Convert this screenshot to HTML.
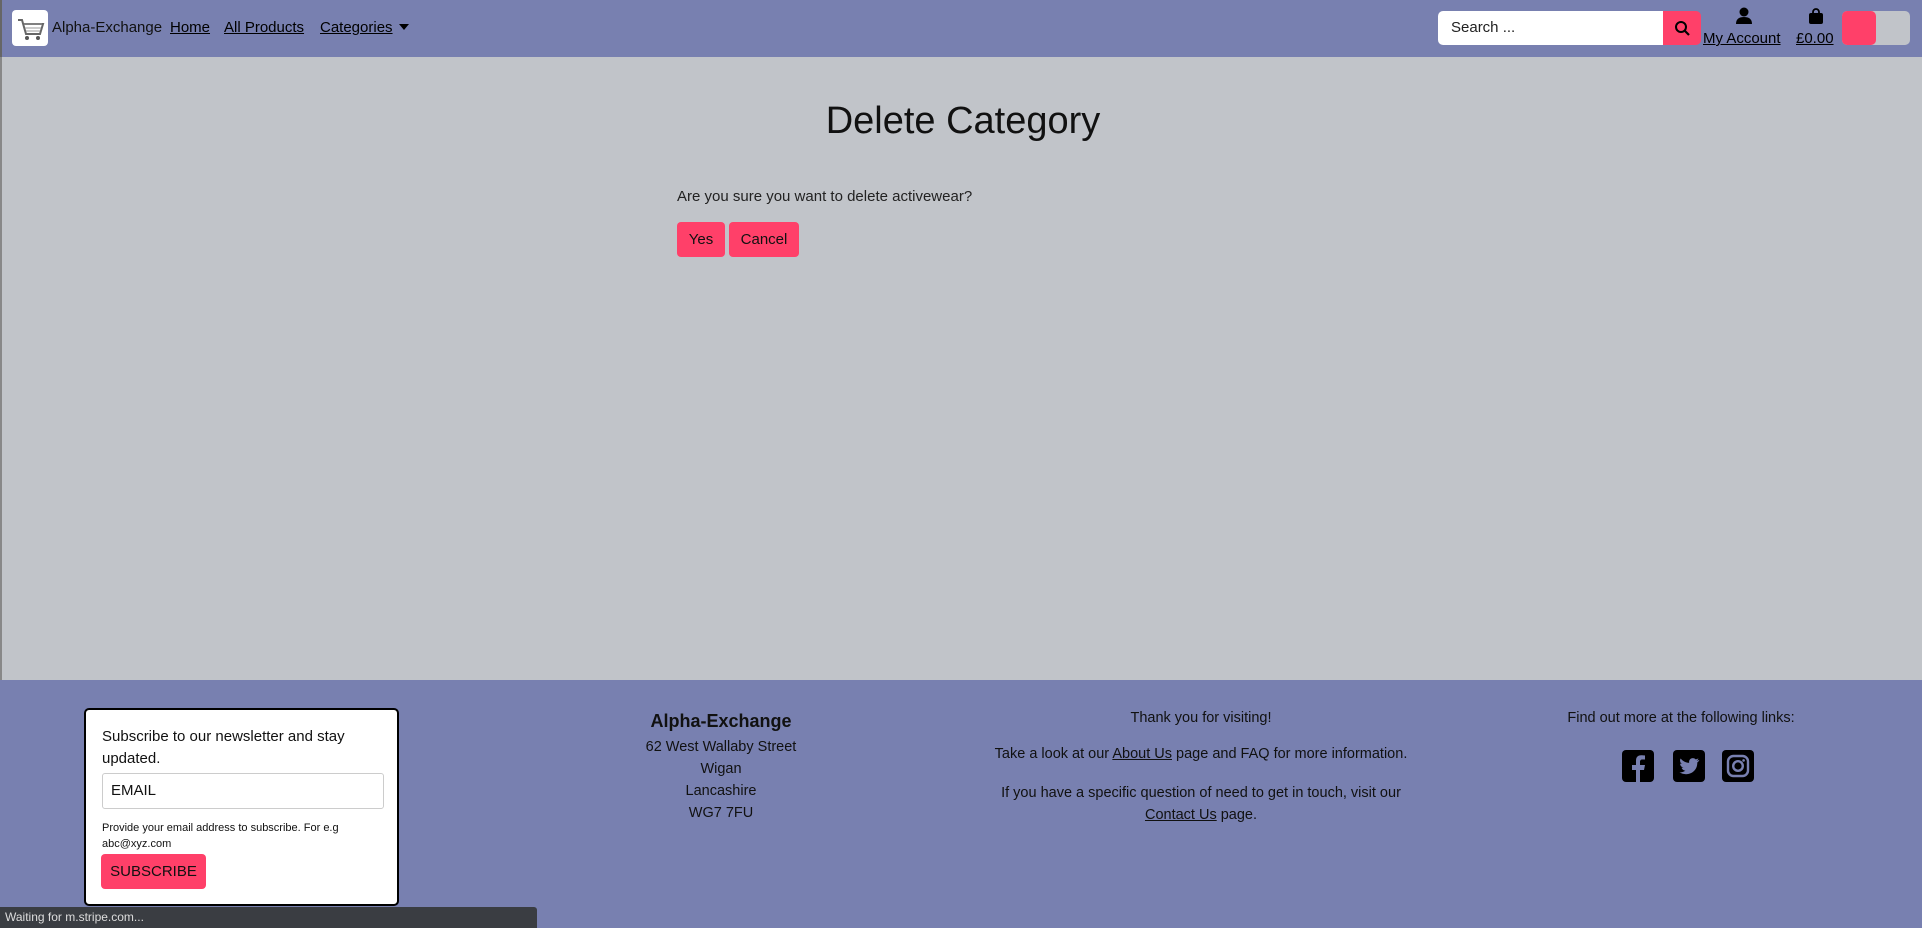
<!DOCTYPE html>
<html><head><meta charset="utf-8"><style>
*{box-sizing:border-box;margin:0;padding:0}
body{width:1922px;height:928px;overflow:hidden;font-family:"Liberation Sans",sans-serif;background:#c1c4c9;position:relative;color:#111}
.nav{position:absolute;left:0;top:0;width:1922px;height:57px;background:#7880b0;border-left:2px solid #666}
.a{position:absolute;color:#000;font-size:15px;text-decoration:underline}
.main{position:absolute;top:57px;left:0;width:1922px;height:623px;background:#c1c4c9;border-left:2px solid #888}
.foot{position:absolute;top:680px;left:0;width:1922px;height:248px;background:#7880b0}
.c{position:absolute;text-align:center;font-size:15px;color:#111;white-space:nowrap}
.btn{position:absolute;background:#ff4069;border-radius:4px;font-size:15px;color:#111;text-align:center;line-height:35px}
</style></head><body>
<div class="nav">
 <div style="position:absolute;left:10px;top:10px;width:36px;height:36px;background:#fff;border-radius:4px">
  <svg width="36" height="36" viewBox="0 0 36 36"><path d="M6 10h4l4 14h14l3-10H12" stroke="#666" stroke-width="2" fill="none"/><path d="M12 14h18M13 18h16M14 21h14" stroke="#999"/><circle cx="15" cy="28" r="2" fill="#555"/><circle cx="26" cy="28" r="2" fill="#555"/></svg>
 </div>
 <span style="position:absolute;left:50px;top:19px;font-size:15px;color:#111">Alpha-Exchange</span>
 <span class="a" style="left:168px;top:19px">Home</span>
 <span class="a" style="left:222px;top:19px">All Products</span>
 <span class="a" style="left:318px;top:19px">Categories</span>
 <span style="position:absolute;left:397px;top:24px;border-left:5px solid transparent;border-right:5px solid transparent;border-top:6px solid #000"></span>
 <div style="position:absolute;left:1436px;top:11px;width:225px;height:34px;background:#fff;border-radius:5px 0 0 5px;font-size:15px;line-height:34px;padding-left:13px;color:#222">Search ...</div>
 <div style="position:absolute;left:1661px;top:11px;width:38px;height:34px;background:#ff4069;border-radius:0 5px 5px 0"><svg width="38" height="34"><circle cx="18" cy="16" r="5" stroke="#000" stroke-width="2" fill="none"/><path d="M22 20l4 4" stroke="#000" stroke-width="2.2"/></svg></div>
 <svg style="position:absolute;left:1733px;top:7px" width="18" height="18"><circle cx="9" cy="5" r="4.5"/><path d="M1 17c0-5 3-7 8-7s8 2 8 7z"/></svg>
 <span class="a" style="left:1701px;top:30px">My Account</span>
 <svg style="position:absolute;left:1806px;top:7px" width="16" height="18"><path d="M5 7V5a3 3 0 016 0v2" stroke="#000" stroke-width="1.8" fill="none"/><rect x="1" y="6" width="14" height="11" rx="2"/></svg>
 <span class="a" style="left:1794px;top:30px">£0.00</span>
 <div style="position:absolute;left:1840px;top:11px;width:68px;height:34px;background:#c1c4c9;border-radius:5px"></div>
 <div style="position:absolute;left:1840px;top:11px;width:34px;height:34px;background:#ff4069;border-radius:5px"></div>
</div>
<div class="main">
 <div style="position:absolute;left:0;width:1922px;top:43px;text-align:center;font-size:38px;color:#111">Delete Category</div>
 <div style="position:absolute;left:675px;top:131px;font-size:15px;color:#222">Are you sure you want to delete activewear?</div>
 <div class="btn" style="left:675px;top:165px;width:48px">Yes</div>
 <div class="btn" style="left:727px;top:165px;width:70px">Cancel</div>
</div>
<div class="foot">
 <div style="position:absolute;left:84px;top:28px;width:315px;height:198px;background:#fff;border:2px solid #000;border-radius:5px">
  <div style="position:absolute;left:16px;top:16px;font-size:15px;line-height:22px;width:270px;color:#111">Subscribe to our newsletter and stay updated.</div>
  <div style="position:absolute;left:16px;top:63px;width:282px;height:36px;border:1px solid #ccc;border-radius:3px;font-size:15px;line-height:34px;padding-left:8px">EMAIL</div>
  <div style="position:absolute;left:16px;top:110px;font-size:11px;line-height:16px;width:260px">Provide your email address to subscribe. For e.g abc@xyz.com</div>
  <div class="btn" style="left:15px;top:144px;width:105px;font-size:15px">SUBSCRIBE</div>
 </div>
 <div class="c" style="left:560px;width:322px;top:31px;font-size:18px;font-weight:bold">Alpha-Exchange</div>
 <div class="c" style="left:560px;width:322px;top:56px;line-height:22px;font-size:14.5px">62 West Wallaby Street<br>Wigan<br>Lancashire<br>WG7 7FU</div>
 <div class="c" style="left:960px;width:482px;top:30px;font-size:14.5px">Thank you for visiting!</div>
 <div class="c" style="left:960px;width:482px;top:66px;font-size:14.5px">Take a look at our <u>About Us</u> page and FAQ for more information.</div>
 <div class="c" style="left:960px;width:482px;top:102px;font-size:14.5px;line-height:22px">If you have a specific question of need to get in touch, visit our<br><u>Contact Us</u> page.</div>
 <div class="c" style="left:1520px;width:322px;top:30px;font-size:14.5px">Find out more at the following links:</div>
 <svg style="position:absolute;left:1622px;top:70px" width="32" height="32" viewBox="0 0 32 32"><rect width="32" height="32" rx="4"/><path d="M18 32V20h4l1-5h-5v-3c0-1.5.6-2.5 2.5-2.5H23V5.5c-1-.2-2.3-.3-3.8-.3-3.6 0-5.2 2-5.2 5.5V15h-4v5h4v12z" fill="#7880b0"/></svg>
 <svg style="position:absolute;left:1673px;top:70px" width="32" height="32" viewBox="0 0 32 32"><rect width="32" height="32" rx="4"/><path d="M26 10c-.8.4-1.6.6-2.4.7.9-.5 1.5-1.3 1.8-2.3-.8.5-1.7.8-2.7 1-1.7-1.8-4.6-1.6-6 .4-.6.9-.8 2-.5 3.1-3.4-.2-6.5-1.8-8.6-4.4-1.1 1.9-.5 4.3 1.3 5.5-.6 0-1.3-.2-1.8-.5 0 2 1.4 3.7 3.3 4.100-.6.2-1.200.2-1.800.1.5 1.7 2.100 2.800 3.800 2.900-1.700 1.300-3.800 1.900-5.900 1.700 7.500 4.800 18 .3 17.800-9.800.8-.6 1.500-1.300 2-2.100z" fill="#7880b0"/></svg>
 <svg style="position:absolute;left:1722px;top:70px" width="32" height="32" viewBox="0 0 32 32"><rect width="32" height="32" rx="4"/><rect x="6" y="6" width="20" height="20" rx="5.5" stroke="#7880b0" stroke-width="2.4" fill="none"/><circle cx="16" cy="16" r="4.8" stroke="#7880b0" stroke-width="2.4" fill="none"/><circle cx="21.6" cy="10.4" r="1.3" fill="#7880b0"/></svg>
</div>
<div style="position:absolute;left:0;top:907px;width:537px;height:21px;background:#3a3d42;border-radius:0 3px 0 0;color:#ddd;font-size:12px;line-height:21px;padding-left:5px">Waiting for m.stripe.com...</div>
</body></html>
